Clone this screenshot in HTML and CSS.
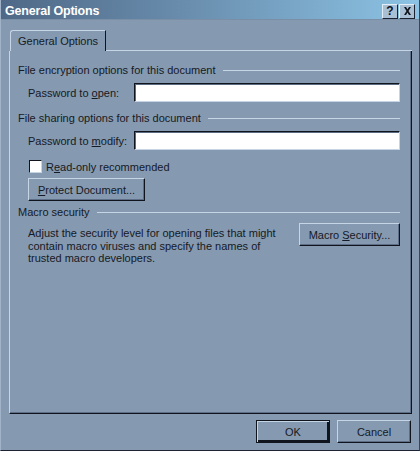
FILE: index.html
```html
<!DOCTYPE html>
<html>
<head>
<meta charset="utf-8">
<link rel="stylesheet" href="styles.css">
</head>
<body>
<div class="window">
  <div class="titlebar">
    <span class="title">General Options</span>
    <div class="caption-btns">
      <span class="cap-btn">?</span>
      <span class="cap-btn x">
        <svg width="9" height="8" viewBox="0 0 9 8"><path d="M1 0h2l1.5 2.5L6 0h2L5.5 4 8 8H6L4.5 5.5 3 8H1l2.5-4z" fill="#10141c"/></svg>
      </span>
    </div>
  </div>
  <div class="client">
    <div class="tabs">
      <div class="tab">General Options</div>
      <div class="tab-rest"></div>
    </div>
    <div class="panel">
      <div class="group-title"><span>File encryption options for this document</span><i></i></div>
      <div class="field-row">
        <label>Password to <u>o</u>pen:</label>
        <div class="input"></div>
      </div>
      <div class="group-title g2"><span>File sharing options for this document</span><i></i></div>
      <div class="field-row">
        <label>Password to <u>m</u>odify:</label>
        <div class="input"></div>
      </div>
      <div class="check-row">
        <span class="checkbox"></span>
        <span>R<u>e</u>ad-only recommended</span>
      </div>
      <div class="btn protect"><span><u>P</u>rotect Document...</span></div>
      <div class="group-title g3"><span>Macro security</span><i></i></div>
      <div class="macro-row">
        <p>Adjust the security level for opening files that might contain macro viruses and specify the names of trusted macro developers.</p>
        <div class="btn macro"><span>Macro <u>S</u>ecurity...</span></div>
      </div>
    </div>
    <div class="footer">
      <div class="btn ok default"><span>OK</span></div>
      <div class="btn cancel"><span>Cancel</span></div>
    </div>
  </div>
</div>
</body>
</html>
```
FILE: styles.css
```css
html, body {
  margin: 0;
  padding: 0;
  background: #8599b1;
}
body {
  width: 420px;
  height: 451px;
  overflow: hidden;
  font-family: "Liberation Sans", Arial, sans-serif;
  font-size: 11px;
  color: #161a24;
}
u { text-decoration: underline; text-underline-offset: 1px; }
.window {
  box-sizing: border-box;
  width: 420px;
  height: 451px;
  border-left: 1px solid #9fb2c8;
  border-right: 1px solid #3a4558;
  border-bottom: 1px solid #1d2330;
  display: flex;
  flex-direction: column;
  background: #8599b1;
}
.titlebar {
  height: 20px;
  flex: none;
  display: flex;
  align-items: center;
  justify-content: space-between;
  padding: 3px 4px 0 4px;
  background: linear-gradient(to right, #4f6887 0%, #6a8eae 45%, #8cc3e4 100%);
  border-bottom: 1px solid #7a8ea6;
  box-sizing: border-box;
}
.title {
  color: #ffffff;
  font-weight: bold;
  font-size: 12.5px;
  letter-spacing: -0.2px;
}
.caption-btns { display: flex; gap: 1px; }
.cap-btn {
  box-sizing: border-box;
  width: 16px;
  height: 15px;
  background: #a9bfd3;
  border-top: 1px solid #e4eef8;
  border-left: 1px solid #e4eef8;
  border-right: 1px solid #1b2230;
  border-bottom: 1px solid #1b2230;
  display: flex;
  align-items: center;
  justify-content: center;
  font-weight: bold;
  font-size: 12px;
  color: #10141c;
  line-height: 1;
}
.client {
  flex: 1;
  display: flex;
  flex-direction: column;
  padding: 10px 7px 0 8px;
}
.tabs { display: flex; height: 21px; align-items: flex-end; }
.tab {
  box-sizing: border-box;
  height: 21px;
  width: 96px;
  margin-left: 1px;
  border-left: 1px solid #c6d5e6;
  border-top: 1px solid #c6d5e6;
  border-right: 1px solid #10141c;
  border-top-left-radius: 3px;
  padding: 4px 0 0 7px;
}
.tab-rest {
  flex: 1;
  border-bottom: 1px solid #c6d5e6;
  height: 0;
}
.panel {
  box-sizing: border-box;
  height: 363px;
  border-left: 1px solid #c6d5e6;
  border-right: 1px solid #10141c;
  border-bottom: 1px solid #10141c;
  box-shadow: inset -1px -1px 0 #5d6e86;
  padding: 12px 11px 0 8px;
  display: flex;
  flex-direction: column;
}
.group-title {
  display: flex;
  align-items: center;
  height: 14px;
}
.group-title i {
  flex: 1;
  height: 0;
  border-top: 1px solid #c6d5e6;
  margin-left: 7px;
}
.g2 { margin-top: 9px; }
.g3 { margin-top: 4px; }
.field-row {
  display: flex;
  align-items: center;
  margin-top: 6px;
  padding-left: 10px;
  height: 19px;
}
.field-row label { width: 106px; flex: none; }
.input {
  flex: 1;
  box-sizing: border-box;
  height: 19px;
  background: #ffffff;
  border-top: 1px solid #10141c;
  border-left: 1px solid #10141c;
  border-right: 1px solid #c6d5e6;
  border-bottom: 1px solid #c6d5e6;
  box-shadow: inset 1px 1px 0 #5a6a80;
}
.check-row {
  display: flex;
  align-items: center;
  margin-top: 10px;
  padding-left: 11px;
  height: 13px;
  gap: 4px;
}
.checkbox {
  box-sizing: border-box;
  width: 13px;
  height: 13px;
  background: #fff;
  border-top: 1px solid #10141c;
  border-left: 1px solid #10141c;
  border-right: 1px solid #c6d5e6;
  border-bottom: 1px solid #c6d5e6;
}
.btn {
  box-sizing: border-box;
  height: 23px;
  border-top: 1px solid #c6d5e6;
  border-left: 1px solid #c6d5e6;
  border-right: 1px solid #10141c;
  border-bottom: 1px solid #10141c;
  box-shadow: inset -1px -1px 0 #5d6e86;
  display: flex;
  align-items: center;
  justify-content: center;
  flex: none;
}
.protect {
  width: 117px;
  margin-top: 5px;
  margin-left: 10px;
}
.macro-row {
  display: flex;
  align-items: flex-start;
  justify-content: space-between;
  padding-left: 10px;
  margin-top: 4px;
}
.macro-row p {
  margin: 0;
  width: 262px;
  line-height: 12.5px;
  padding-top: 4px;
}
.macro {
  width: 101px;
}
.footer {
  display: flex;
  justify-content: flex-end;
  gap: 7px;
  padding-top: 6px;
  padding-right: 1px;
}
.ok, .cancel { width: 74px; height: 23px; }
.default {
  border: 1px solid #10141c;
  box-shadow: inset 1px 1px 0 #c6d5e6, inset -2px -2px 0 #10141c;
}
```
